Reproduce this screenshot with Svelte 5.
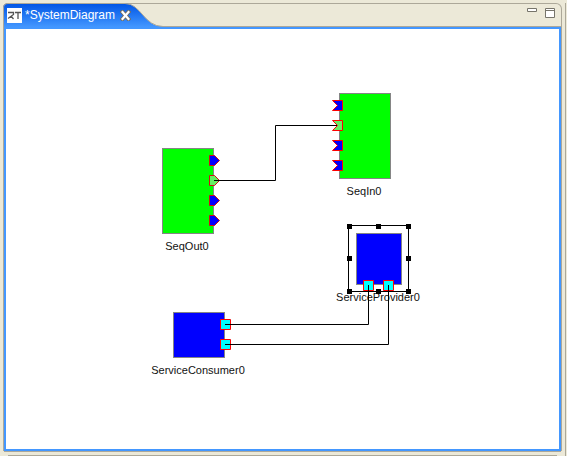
<script>
  const nodes = [
    { name: 'SeqOut0', x: 156, y: 119, w: 52, h: 86, fill: '#00ff00' },
    { name: 'SeqIn0', x: 333, y: 64, w: 52, h: 86, fill: '#00ff00' },
    { name: 'ServiceProvider0', x: 350, y: 204, w: 46, h: 52, fill: '#0000ff' },
    { name: 'ServiceConsumer0', x: 167, y: 283, w: 52, h: 46, fill: '#0000ff' }
  ];
  const outShape = 'M.5 .5H5.5L10.5 5.5L5.5 10.5H.5Z';
  const inShape = 'M.5 .5H10.5V10.5H.5L5.5 5.5Z';
  const serviceShape = 'M.5 .5H10.5V10.5H.5Z';
  const ports = [
    { x: 203, y: 126, d: outShape, fill: '#0000ff', edge: '#d01010' },
    { x: 203, y: 146, d: outShape, fill: '#64f064', edge: '#d01010' },
    { x: 203, y: 166, d: outShape, fill: '#0000ff', edge: '#d01010' },
    { x: 203, y: 186, d: outShape, fill: '#0000ff', edge: '#d01010' },
    { x: 326, y: 71, d: inShape, fill: '#0000ff', edge: '#ff0000' },
    { x: 326, y: 91, d: inShape, fill: '#64f064', edge: '#ff0000' },
    { x: 326, y: 111, d: inShape, fill: '#0000ff', edge: '#ff0000' },
    { x: 326, y: 131, d: inShape, fill: '#0000ff', edge: '#ff0000' },
    { x: 357, y: 251, d: serviceShape, fill: '#00ffff', edge: '#ff0000' },
    { x: 377, y: 251, d: serviceShape, fill: '#00ffff', edge: '#ff0000' },
    { x: 214, y: 290, d: serviceShape, fill: '#00ffff', edge: '#ff0000' },
    { x: 214, y: 310, d: serviceShape, fill: '#00ffff', edge: '#ff0000' }
  ];
  const wires = [
    '208,151.5 269.5,151.5 269.5,96.5 331,96.5',
    '219,295.5 362.5,295.5 362.5,256',
    '219,315.5 382.5,315.5 382.5,256'
  ];
  const handles = [
    [341, 195], [370, 195], [400, 195],
    [341, 227], [400, 227],
    [341, 260], [370, 260], [400, 260]
  ];
</script>

<div class="workbench">
  <section class="pane">
    <header>
      <div class="tab">
        <svg class="shape" width="160" height="24" viewBox="0 0 160 24" aria-hidden="true">
          <defs>
            <linearGradient id="tabfill" x1="0" y1="0" x2="0" y2="1">
              <stop offset="0" stop-color="#0055e5" />
              <stop offset="1" stop-color="#4397ff" />
            </linearGradient>
          </defs>
          <path d="M0 24V5Q0 .5 5 .5H122C138 .5 141 23.500 160 23.500V24Z" fill="url(#tabfill)" />
          <path d="M.5 24V5Q.5 .5 5 .5H122C138 .5 141 23.500 160 23.500" fill="none" stroke="#aca899" />
        </svg>
        <svg class="logo" width="15" height="15" viewBox="0 0 15 15" aria-hidden="true">
          <path fill="#fff" d="M0 0h15v15H0z" />
          <path d="M1 4.500H6.500V6.500L1 10.500M4 8L6.500 11M8 4.500H14M11 4.500V11" fill="none" stroke="#555" stroke-width="1.300" />
        </svg>
        <span class="title">*SystemDiagram</span>
        <button class="close" aria-label="Close">
          <svg width="11" height="11" viewBox="0 0 11 11">
            <path d="M2.500 2L8.500 9M8.500 2L2.500 9" stroke="#716f64" stroke-width="4" stroke-linecap="square" />
            <path d="M2.500 2L8.500 9M8.500 2L2.500 9" stroke="#fff" stroke-width="2.200" stroke-linecap="square" />
          </svg>
        </button>
      </div>
      <div class="controls">
        <button aria-label="Minimize">
          <svg width="10" height="10" viewBox="0 0 10 10"><path d="M.5 .5H9.500V3.500H.5Z" fill="#fff" stroke="#76746a" /></svg>
        </button>
        <button aria-label="Maximize">
          <svg width="10" height="10" viewBox="0 0 10 10"><path d="M.5 .5H9.500V9.500H.5ZM.5 2.500H9.500" fill="#fff" stroke="#76746a" /></svg>
        </button>
      </div>
    </header>
    <div class="editor">
      <svg class="diagram" width="100%" height="100%" aria-label="System diagram">
        {#each nodes as n}
          <rect x={n.x + 0.5} y={n.y + 0.5} width={n.w - 1} height={n.h - 1} fill={n.fill} stroke="#858585" />
          <text x={n.x + n.w / 2 - 1} y={n.y + n.h + 16}>{n.name}</text>
        {/each}
        <rect x="342.5" y="196.5" width="60" height="66" fill="none" stroke="#000" />
        {#each handles as [x, y]}
          <rect {x} {y} width="5" height="5" fill="#000" />
        {/each}
        {#each ports as p}
          <path transform="translate({p.x} {p.y})" d={p.d} fill={p.fill} stroke={p.edge} />
        {/each}
        {#each wires as points}
          <polyline {points} fill="none" stroke="#000" />
        {/each}
      </svg>
    </div>
  </section>
  <div class="below"></div>
  <div class="neighbour"></div>
</div>

<style>
  .workbench {
    box-sizing: border-box;
    height: 100vh;
    display: grid;
    grid-template: minmax(0, 1fr) 1px / minmax(0, 1fr) 2px;
    gap: 4px 3px;
    padding: 3px 0 0 3px;
    overflow: hidden;
    background: #ece9d8;
    font-family: "Liberation Sans", Arial, sans-serif;
    font-size: 12px;
  }
  .pane {
    display: flex;
    flex-direction: column;
    min-height: 0;
  }
  header {
    box-sizing: border-box;
    height: 24px;
    flex: none;
    display: flex;
    justify-content: space-between;
    border: solid #aca899;
    border-width: 1px 1px 1px 0;
    border-radius: 5px 6px 0 0;
  }
  .tab {
    position: relative;
    display: flex;
    align-items: center;
    width: 160px;
    height: 22px;
    padding-left: 4px;
    box-sizing: border-box;
  }
  .shape {
    position: absolute;
    left: 0;
    top: -1px;
  }
  .logo, .title, .close {
    position: relative;
  }
  .title {
    margin-left: 3px;
    width: 92px;
    color: #fff;
    white-space: nowrap;
  }
  button {
    display: block;
    padding: 0;
    border: 0;
    background: none;
  }
  button svg {
    display: block;
  }
  .close {
    margin-left: 3px;
  }
  .controls {
    display: flex;
    align-items: flex-start;
    gap: 8px;
    padding: 4px 6px 0 0;
  }
  .editor {
    flex: 1;
    min-height: 0;
    border: 2px solid #4397ff;
    box-shadow: 0 1px #aca899, 1px 0 #aca899, -1px 0 #aca899;
    margin: 0 1px;
    background: #fff;
  }
  .diagram {
    display: block;
  }
  text {
    fill: #111;
    font-size: 11px;
    text-anchor: middle;
  }
  .neighbour {
    grid-column: 2;
    grid-row: 1 / 3;
    border-left: 1px solid #aca899;
  }
  .below {
    grid-column: 1;
    grid-row: 2;
    margin: 0 5px;
    background: #aca899;
  }
</style>
